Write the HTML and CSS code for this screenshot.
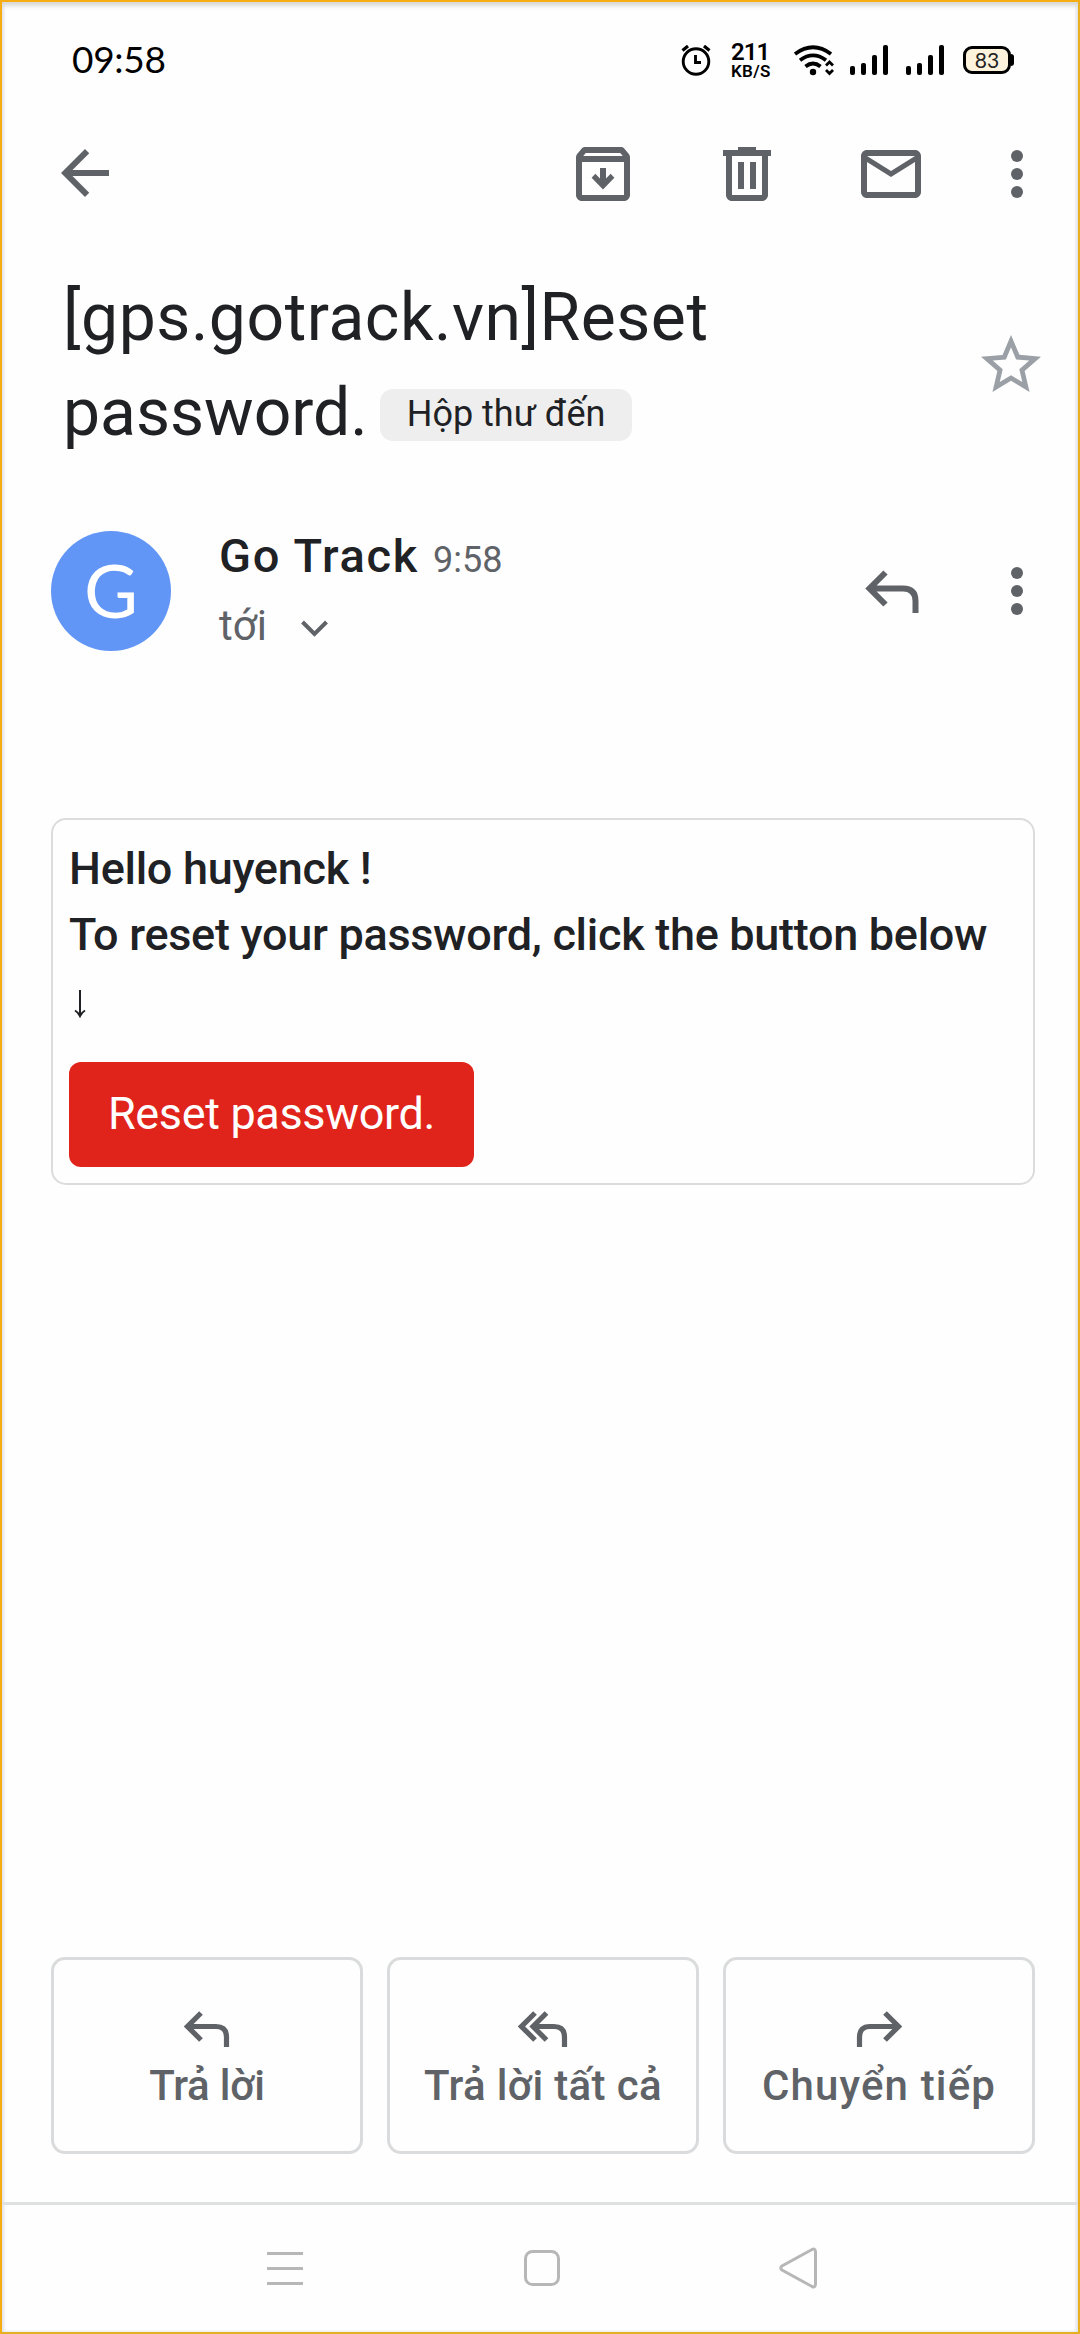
FILE: index.html
```html
<!DOCTYPE html>
<html lang="vi">
<head>
<meta charset="utf-8">
<title>[gps.gotrack.vn]Reset password.</title>
<link rel="stylesheet" href="styles.css">
</head>
<body>
<div class="phone">
  <header class="status">
    <span class="clock">09:58</span>
    <div class="status-icons">
      <svg class="alarm" width="30" height="32" viewBox="0 0 30 32" fill="none" stroke="#000"><circle cx="15" cy="17.5" r="12.8" stroke-width="2.9"/><path d="M14.500 11v7.500h5.500" stroke-width="2.900"/><path d="M1.500 6.500 7 2M28.500 6.500 23 2" stroke-width="3.200"/></svg>
      <div class="speed"><span class="rate">211</span><span class="unit">KB/S</span></div>
      <svg class="wifi" width="40" height="32" viewBox="0 0 40 32" fill="none" stroke="#000" stroke-width="3.800"><path d="M1 9Q19 -4.500 37 9M6 15.300Q19 5.500 32 15.300M11.500 21.500Q19 15.500 26.500 21.500"/><circle cx="19" cy="27" r="3.200" fill="#000" stroke="none"/><path d="M32 20.500 35.500 17 39 20.500M32 25 35.500 28.500 39 25" stroke-width="2.800"/></svg>
      <svg class="bars" width="38" height="30" viewBox="0 0 38 30"><g fill="#000"><rect y="21" width="5" height="9" rx="2"/><rect x="11" y="18" width="5" height="12" rx="2"/><rect x="22" y="10" width="5" height="20" rx="2"/><rect x="33" width="5" height="30" rx="2"/></g></svg>
      <svg class="bars bars-second" width="38" height="30" viewBox="0 0 38 30"><g fill="#000"><rect y="21" width="5" height="9" rx="2"/><rect x="11" y="18" width="5" height="12" rx="2"/><rect x="22" y="10" width="5" height="20" rx="2"/><rect x="33" width="5" height="30" rx="2"/></g></svg>
      <div class="battery"><span class="level">83</span></div><i class="battery-tip"></i>
    </div>
  </header>

  <nav class="toolbar">
    <svg class="icon back" viewBox="0 0 24 24"><path d="M20 11H7.830l5.590-5.590L12 4l-8 8 8 8 1.410-1.410L7.830 13H20v-2z"/></svg>
    <svg class="icon" viewBox="0 0 24 24"><path fill-rule="evenodd" d="M20.540 5.230 19.150 3.550C18.880 3.210 18.470 3 18 3H6c-.470 0-.880.210-1.160.550L3.460 5.230C3.170 5.570 3 6.020 3 6.500V19c0 1.100.9 2 2 2h14c1.100 0 2-.9 2-2V6.500c0-.480-.170-.930-.460-1.270zM6.240 5h11.520l.830 1H5.420l.82-1zM5 19V8h14v11H5z"/><path d="M11 10v3.500l-1.550-1.550L8.200 13.250 12 17.200l3.800-3.950-1.250-1.300L13 13.500V10z"/></svg>
    <svg class="icon" viewBox="0 0 24 24"><path fill-rule="evenodd" d="M15 4V3H9v1H4v2h1v13c0 1.100.9 2 2 2h10c1.100 0 2-.9 2-2V6h1V4h-5zm2 15H7V6h10v13zM9 8h2v9H9zm4 0h2v9h-2z"/></svg>
    <svg class="icon" viewBox="0 0 24 24"><path fill-rule="evenodd" d="M4 4h16c1.100 0 2 .9 2 2v12c0 1.100-.9 2-2 2H4c-1.100 0-2-.9-2-2V6c0-1.100.9-2 2-2zm0 14h16V8l-8 5-8-5v10zM4 6l8 5 8-5H4z"/></svg>
    <svg class="icon more" viewBox="0 0 24 24"><circle cx="12" cy="6" r="2"/><circle cx="12" cy="12" r="2"/><circle cx="12" cy="18" r="2"/></svg>
  </nav>

  <section class="subject">
    <h1 class="title"><span class="title-first">[gps.gotrack.vn]Reset</span><br><span class="title-last">password.</span><span class="chip">Hộp thư đến</span></h1>
    <svg class="icon star" viewBox="0 0 24 24"><path d="M22 9.240l-7.190-.62L12 2 9.190 8.630 2 9.240l5.460 4.730L5.820 21 12 17.270 18.180 21l-1.630-7.030L22 9.240zM12 15.400l-3.760 2.270 1-4.280-3.320-2.880 4.380-.38L12 6.100l1.710 4.040 4.380.38-3.320 2.880 1 4.280L12 15.400z"/></svg>
  </section>

  <section class="sender">
    <div class="avatar">G</div>
    <div class="who">
      <div class="from"><span class="name">Go Track</span><span class="time">9:58</span></div>
      <div class="to"><span class="to-label">tới</span><svg class="chevron" width="27" height="17" viewBox="0 0 27 17" fill="none" stroke="#5f6368" stroke-width="4"><path d="M1.500 2 13.500 14 25.500 2"/></svg></div>
    </div>
    <svg class="reply" width="54" height="44" viewBox="0 0 54 44" fill="none" stroke="#5f6368" stroke-width="6"><path d="M20.500 2.500 4.500 18.500 20.500 34.500M5 18.500H38Q50.500 18.500 50.500 31V43"/></svg>
    <svg class="icon more" viewBox="0 0 24 24"><circle cx="12" cy="6" r="2"/><circle cx="12" cy="12" r="2"/><circle cx="12" cy="18" r="2"/></svg>
  </section>

  <main class="message">
    <div class="card">
      <p class="line"><span class="hello">Hello huyenck !</span></p>
      <p class="line"><span class="instruction">To reset your password, click the button below</span></p>
      <svg class="down" width="12" height="28" viewBox="0 0 12 28" fill="none" stroke="#202124" stroke-width="2"><path d="M6 0V25M1 20.500Q4.500 22.500 6 26Q7.500 22.500 11 20.500"/></svg>
      <a class="reset">Reset password.</a>
    </div>
  </main>

  <footer class="actions">
    <button class="action"><svg width="46" height="36" viewBox="0 0 46 36"><path d="M17 2 3.500 15.500 17 29M4 15.500H32Q42.500 15.500 42.500 26V36"/></svg><span class="reply-text">Trả lời</span></button>
    <button class="action"><svg width="50" height="36" viewBox="0 0 50 36"><path d="M17 2 3.500 15.500 17 29M28.500 2 15 15.500 28.500 29M16 15.500H36Q46.500 15.500 46.500 26V36"/></svg><span class="all-text">Trả lời tất cả</span></button>
    <button class="action"><svg width="46" height="36" viewBox="0 0 46 36"><path d="M29 2 42.500 15.500 29 29M42 15.500H14Q3.500 15.500 3.500 26V36"/></svg><span class="forward-text">Chuyển tiếp</span></button>
  </footer>

  <nav class="system">
    <svg width="40" height="42" viewBox="0 0 40 42"><path d="M2 6.500H38M2 21.500H38M2 36.500H38"/></svg>
    <svg width="40" height="42" viewBox="0 0 40 42"><rect x="3.500" y="4.500" width="33" height="33" rx="7"/></svg>
    <svg width="40" height="42" viewBox="0 0 40 42"><path d="M34 2.500Q37.500 1 37.500 5V37Q37.500 41 34 39.500L4 23Q1.500 21 4 19Z"/></svg>
  </nav>
</div>
</body>
</html>
```
FILE: styles.css
```css
* { box-sizing: border-box; }
body { margin: 0; background: #fefefe; font-family: Roboto, "Noto Sans", sans-serif; color: #202124; }
.phone {
  width: 1080px; height: 2334px; overflow: hidden;
  display: flex; flex-direction: column;
  border: 2px solid #f7ad12; border-right-color: #e8b021; border-bottom-color: #e6b025;
  box-shadow: inset 0 5px 4px -1px #d9dad4, inset 2px 0 3px #e4e5ea, inset -2px 0 3px #e4e5ea;
}
svg { display: block; flex: none; }
.icon { width: 72px; height: 72px; fill: #5f6368; }

.status { height: 116px; padding: 0 64px 0 70px; display: flex; justify-content: space-between; }
.clock { font: 37px/44px Lato, sans-serif; letter-spacing: -0.3px; color: #000; padding-top: 35px; }
.status-icons { display: flex; align-items: flex-start; padding-top: 41px; }
.alarm { margin-top: 1px; }
.speed { width: 42px; margin-left: 20px; display: flex; flex-direction: column; color: #000; }
.rate { font-size: 24px; font-weight: 600; line-height: 18px; letter-spacing: -1px; }
.unit { font-size: 17px; font-weight: 600; line-height: 18px; margin-top: 1px; letter-spacing: .3px; }
.wifi { margin: 2px 0 0 21px; }
.bars { margin: 2px 0 0 16px; }
.bars-second { margin-left: 18px; }
.battery { width: 48px; height: 28px; margin: 3px 0 0 19px; border: 3px solid #000; border-radius: 9px; background: #fdf3dc; text-align: center; }
.level { display: block; font: 21px/22px Lato, sans-serif; color: #222; }
.battery-tip { width: 3px; height: 12px; margin-top: 11px; background: #000; border-radius: 0 3px 3px 0; }

.toolbar { height: 92px; margin-top: 20px; padding: 0 25px 0 47px; display: flex; align-items: flex-start; gap: 72px; }
.back { margin: -1px auto 0 0; }
.toolbar .more { margin-left: -18px; }

.subject { height: 251px; margin-top: 40px; padding: 0 31px 0 61px; display: flex; justify-content: space-between; }
.title { margin: 0; font-size: 66px; font-weight: 400; line-height: 95px; white-space: nowrap; }
.title-first { letter-spacing: .55px; }
.chip { display: inline-block; height: 52px; padding: 0 27px; margin-left: 12px; border-radius: 13px; background: #eee; font-size: 36px; line-height: 50px; vertical-align: 9px; }
.star { margin-top: 59px; fill: #9aa0a6; }

.sender { height: 130px; margin-top: 10px; padding: 0 25px 0 49px; display: flex; align-items: flex-start; }
.avatar { width: 120px; height: 120px; border-radius: 50%; background: #6296f6; color: #fff; font: 74px/118px Lato, sans-serif; text-align: center; }
.who { margin-left: 48px; padding-top: 1px; flex: 1; }
.from { display: flex; align-items: baseline; height: 59px; line-height: 48px; }
.name { font-size: 47px; font-weight: 500; letter-spacing: 1.7px; }
.time { font-size: 36px; color: #5f6368; margin-left: 14px; }
.to { display: flex; align-items: center; gap: 34px; font-size: 42px; line-height: 70px; color: #5f6368; }
.chevron { margin-top: 4px; }
.reply { margin: 39px 62px 0 0; }
.sender .more { margin-top: 24px; }

.message { flex: 1; padding: 157px 43px 0 49px; }
.card { height: 367px; border: 2px solid #dcdcdc; border-radius: 15px; padding: 16px; display: flex; flex-direction: column; align-items: flex-start; }
.line { margin: 0; font-size: 45px; font-weight: 500; line-height: 66px; height: 66px; white-space: nowrap; letter-spacing: -.29px; }
.down { margin: 22px 0 0 5px; }
.reset { width: 405px; height: 105px; margin-top: 44px; border-radius: 12px; background: #e0241b; color: #fff; font-size: 45px; line-height: 103px; text-align: center; letter-spacing: -.35px; }

.actions { height: 245px; padding: 0 43px 0 49px; display: grid; grid-template-columns: repeat(3, 312px); gap: 24px; align-items: start; }
.action { height: 197px; padding: 51px 0 0; border: 3px solid #dadbdc; border-radius: 14px; background: transparent; display: flex; flex-direction: column; align-items: center; font: 500 42px/60px Roboto, "Noto Sans", sans-serif; color: #5f6368; white-space: nowrap; }
.action svg { fill: none; stroke: #5f6368; stroke-width: 5.2; }
.action span { margin-top: 9px; }
.reply-text { letter-spacing: -.2px; }
.all-text { letter-spacing: .35px; }
.forward-text { letter-spacing: 1.15px; }

.system { height: 130px; border-top: 3px solid #dfe0e0; padding: 42px 260px 0 263px; display: flex; justify-content: space-between; align-items: flex-start; }
.system svg { fill: none; stroke: #b7b7b7; stroke-width: 3; }
```
